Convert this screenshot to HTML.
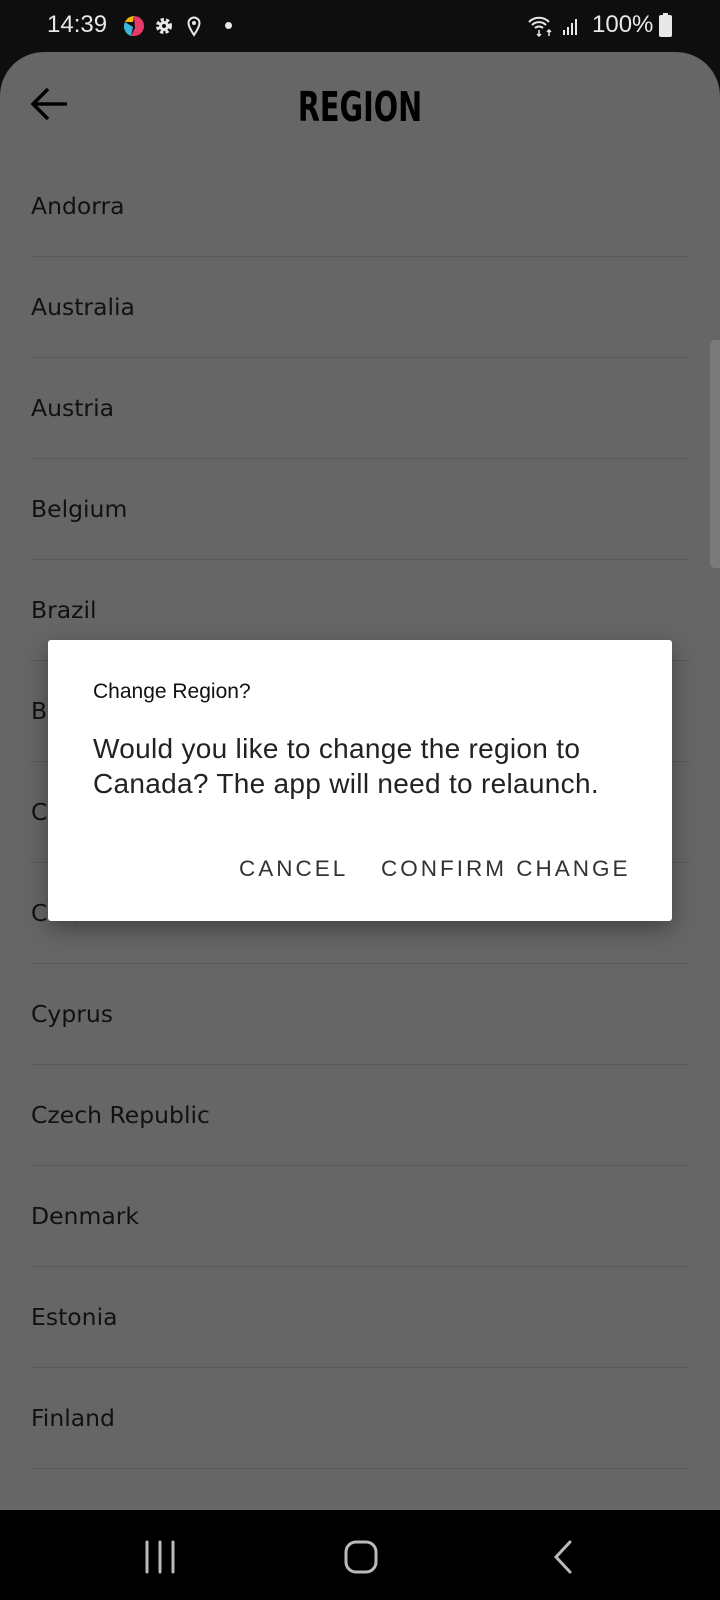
<!DOCTYPE html>
<html><head><meta charset="utf-8"><style>
*{margin:0;padding:0;box-sizing:border-box}
body{width:720px;height:1600px;background:#0e0e0e;position:relative;overflow:hidden;font-family:"Liberation Sans","DejaVu Sans",sans-serif}
.status{position:absolute;top:0;left:0;width:720px;height:52px;background:#0e0e0e;color:#e8e8e8;font-size:24px}
.page{position:absolute;top:52px;left:0;width:720px;height:1458px;background:#666;border-radius:44px 44px 0 0;overflow:hidden}
.title{position:absolute;top:31px;left:0;width:720px;text-align:center;font-size:41px;font-weight:bold;color:#000;font-family:"DejaVu Sans",sans-serif;transform:scaleX(0.7)}
.row{position:absolute;left:31px;color:#111;font-family:"DejaVu Sans",sans-serif;font-size:23.5px}
.div{position:absolute;left:30px;width:660px;height:1px;background:#5a5a5a}
.nav{position:absolute;top:1510px;left:0;width:720px;height:90px;background:#000}
.dlg{position:absolute;left:48px;top:640px;width:624px;height:281px;background:#fff;border-radius:3px;box-shadow:0 8px 24px rgba(0,0,0,.35)}
.dlg .t{position:absolute;left:45px;top:40px;font-size:21px;color:#111}
.dlg .b{position:absolute;left:45px;top:91px;font-size:28px;line-height:35px;color:#222;width:570px;letter-spacing:0.3px}
.btn{position:absolute;top:216px;font-size:22.5px;letter-spacing:3px;color:#333;font-weight:500}
</style></head><body>
<div class="status">
<span style="position:absolute;left:47px;top:11px">14:39</span>
<svg style="position:absolute;left:122px;top:14px" width="24" height="24" viewBox="0 0 24 24"><path d="M12 2a10 10 0 0 0-9 6h8z" fill="#f8b400"/><path d="M3 8a10 10 0 0 0 6 14l2-9z" fill="#3bb5d8"/><path d="M12 2a10 10 0 0 1 0 20l-3 0 4-8z" fill="#e83a6a"/></svg>
<svg style="position:absolute;left:154px;top:16px" width="20" height="20" viewBox="0 0 20 20"><circle cx="10" cy="10" r="6" fill="none" stroke="#e8e8e8" stroke-width="4" stroke-dasharray="3 2"/><circle cx="10" cy="10" r="5" fill="#e8e8e8"/><circle cx="10" cy="10" r="2" fill="#0e0e0e"/></svg>
<svg style="position:absolute;left:187px;top:15px" width="14" height="22" viewBox="0 0 14 22"><path d="M7 20C3 14 1.5 11 1.5 8a5.5 5.5 0 0 1 11 0c0 3-1.5 6-5.5 12z" fill="none" stroke="#e8e8e8" stroke-width="2"/><circle cx="7" cy="8" r="2" fill="#e8e8e8"/></svg>
<div style="position:absolute;left:225px;top:22px;width:7px;height:7px;border-radius:50%;background:#e8e8e8"></div>
<svg style="position:absolute;left:528px;top:14px" width="26" height="24" viewBox="0 0 26 24"><path d="M1 8a14 14 0 0 1 20 0M4 11a10 10 0 0 1 14 0M7 14a6 6 0 0 1 8 0" fill="none" stroke="#e8e8e8" stroke-width="2"/><path d="M11 16v6M9 20l2 2 2-2M21 22v-6M19 18l2-2 2 2" fill="none" stroke="#e8e8e8" stroke-width="1.5"/></svg>
<svg style="position:absolute;left:562px;top:16px" width="20" height="20" viewBox="0 0 20 20"><rect x="1" y="14" width="2" height="5" fill="#e8e8e8"/><rect x="5" y="11" width="2" height="8" fill="#e8e8e8"/><rect x="9" y="7" width="2" height="12" fill="#e8e8e8"/><rect x="13" y="3" width="2" height="16" fill="#e8e8e8"/></svg>
<span style="position:absolute;left:592px;top:11px">100%</span>
<div style="position:absolute;left:659px;top:15px;width:13px;height:22px;background:#e8e8e8;border-radius:2px"></div>
<div style="position:absolute;left:663px;top:13px;width:5px;height:3px;background:#e8e8e8"></div>
</div>
<div class="page">
<svg style="position:absolute;left:29px;top:33px" width="40" height="38" viewBox="0 0 40 38"><path d="M38 19H4M19 4L4 19l15 15" fill="none" stroke="#000" stroke-width="3.5"/></svg>
<div class="title">REGION</div>
<div style="position:absolute;right:0;top:288px;width:10px;height:228px;background:#7a7a7a;border-radius:5px 0 0 5px"></div>
<div class="row" style="top:140px">Andorra</div><div class="div" style="top:204px"></div>
<div class="row" style="top:241px">Australia</div><div class="div" style="top:305px"></div>
<div class="row" style="top:342px">Austria</div><div class="div" style="top:406px"></div>
<div class="row" style="top:443px">Belgium</div><div class="div" style="top:507px"></div>
<div class="row" style="top:544px">Brazil</div><div class="div" style="top:608px"></div>
<div class="row" style="top:645px">Bulgaria</div><div class="div" style="top:709px"></div>
<div class="row" style="top:746px">Canada</div><div class="div" style="top:810px"></div>
<div class="row" style="top:847px">Croatia</div><div class="div" style="top:911px"></div>
<div class="row" style="top:948px">Cyprus</div><div class="div" style="top:1012px"></div>
<div class="row" style="top:1049px">Czech Republic</div><div class="div" style="top:1113px"></div>
<div class="row" style="top:1150px">Denmark</div><div class="div" style="top:1214px"></div>
<div class="row" style="top:1251px">Estonia</div><div class="div" style="top:1315px"></div>
<div class="row" style="top:1352px">Finland</div><div class="div" style="top:1416px"></div>
<div class="row" style="top:1453px">France</div>
</div>
<div class="dlg">
<div class="t">Change Region?</div>
<div class="b">Would you like to change the region to<br>Canada? The app will need to relaunch.</div>
<div class="btn" style="left:191px">CANCEL</div>
<div class="btn" style="left:333px">CONFIRM CHANGE</div>
</div>
<div class="nav">
<svg style="position:absolute;left:144px;top:30px" width="32" height="34" viewBox="0 0 32 34"><path d="M3 2v30M16 2v30M29 2v30" stroke="#bbb" stroke-width="3" stroke-linecap="round"/></svg>
<svg style="position:absolute;left:344px;top:30px" width="36" height="34" viewBox="0 0 36 34"><rect x="2" y="2" width="30" height="30" rx="10" fill="none" stroke="#bbb" stroke-width="3"/></svg>
<svg style="position:absolute;left:552px;top:30px" width="22" height="34" viewBox="0 0 22 34"><path d="M18 2L4 17l14 15" fill="none" stroke="#bbb" stroke-width="3" stroke-linecap="round"/></svg>
</div>
</body></html>
